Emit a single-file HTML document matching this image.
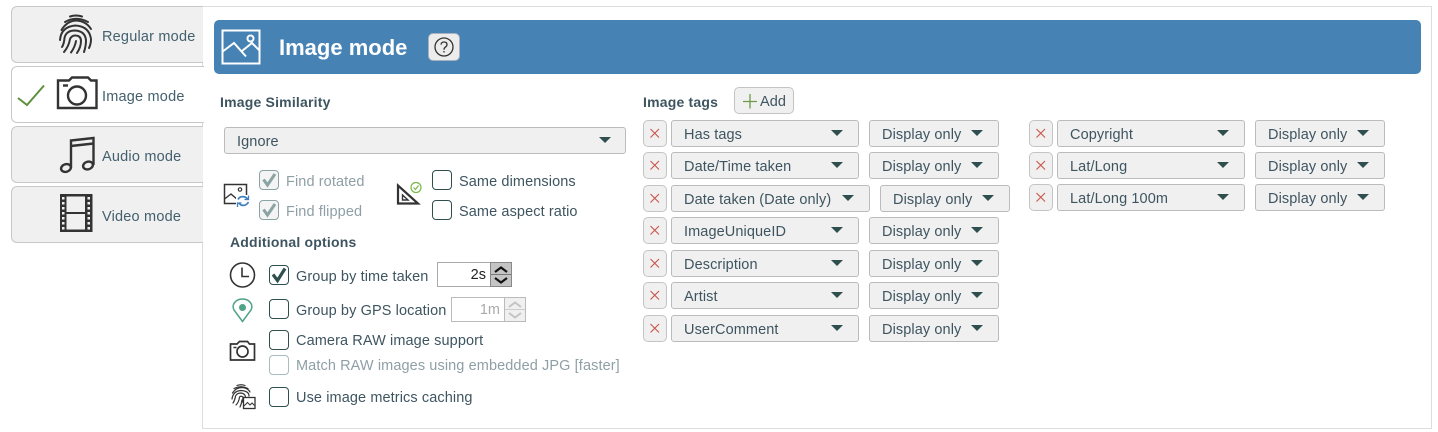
<!DOCTYPE html>
<html><head><meta charset="utf-8"><style>
html,body{margin:0;padding:0;background:#fff;width:1438px;height:432px;overflow:hidden}
body{position:relative;font-family:"Liberation Sans",sans-serif;font-size:14.5px;color:#3e5560}
.a{position:absolute;box-sizing:border-box;white-space:nowrap}
.t{position:absolute;white-space:nowrap;line-height:18px;letter-spacing:.1px;margin-top:1px}
.tab{position:absolute;left:11px;width:192px;height:57px;background:#f0f0f0;border:1px solid #c8c8c8;border-right:0;border-radius:6px 0 0 6px;box-sizing:border-box}
.tl{position:absolute;left:102px;white-space:nowrap;line-height:18px;color:#44606e;letter-spacing:.2px;margin-top:1px}
.s{position:absolute;box-sizing:border-box;height:27px;background:#f0f0f0;border:1px solid #bbb;border-radius:3px;white-space:nowrap;line-height:28px;padding-left:12px;color:#3e5560;letter-spacing:.1px}
.s i{position:absolute;top:9px;width:0;height:0;border-left:6.5px solid transparent;border-right:6.5px solid transparent;border-top:6px solid #2f4f4f}
.x{position:absolute;box-sizing:border-box;width:24px;height:27px;background:#f0f0f0;border:1px solid #c4c4c4;border-radius:5px}
.x svg{position:absolute;left:5px;top:6px}
.c{position:absolute;box-sizing:border-box;width:20px;height:20px;border:1.5px solid #2f4f4f;border-radius:4px;background:#fff}
.c.d{border-color:#8aa3a3;background:#f4f4f4}
.c.f{border-color:#a9bcbc}
.c svg{position:absolute;left:0;top:0}
.b{font-weight:bold;letter-spacing:.2px;color:#3e5560;font-size:14px;margin-top:0}
.g{color:#8f9fa6}
svg{position:absolute;overflow:visible}
</style></head><body>
<div class="a" style="left:202px;top:6px;width:1230px;height:423px;border:1px solid #ddd"></div>

<div class="tab" style="top:6px"></div>
<div class="tab" style="top:66px;background:#fff;width:193px"></div>
<div class="tab" style="top:126px"></div>
<div class="tab" style="top:186px"></div>
<div class="tl" style="top:27px">Regular mode</div>
<div class="tl" style="top:87px">Image mode</div>
<div class="tl" style="top:147px">Audio mode</div>
<div class="tl" style="top:207px">Video mode</div>

<svg style="left:0;top:0" width="210" height="250" fill="none" stroke="#333">
<g stroke-width="2" stroke-linecap="round">
<path d="M70 16.500Q76 14.500 82 16.500"/>
<path d="M65 22Q76 15.500 88 22"/>
<path d="M61.500 30Q67 21 76 20.500Q86 21 91 29"/>
<path d="M60 40Q61 27 75 25.500Q89 26 91 39Q91 44 89 48"/>
<path d="M62 47Q64 44 64.500 38Q66 30.500 75 30.500Q85 31 86 40Q86 46 84 52"/>
<path d="M64 52Q69 46 70 39Q72 35 76 35.500Q81 36 81 41Q81 47 77 53"/>
<path d="M71 52.500Q75 47 76 41"/>
</g>
<path d="M18 98L27 105L44 85.500" stroke="#5f8f3e" stroke-width="2"/>
<path d="M58 80.500H69L72 77.500H88L91 80.500H96.500V108H58Z" stroke-width="2.400"/>
<circle cx="77" cy="95.500" r="9" stroke-width="2.400"/>
<path d="M63 85.500H68" stroke-width="2.400"/>
<g stroke-width="2.400">
<ellipse cx="66" cy="168" rx="5" ry="3.800" transform="rotate(-18 66 168)"/>
<ellipse cx="88" cy="165.500" rx="5" ry="3.800" transform="rotate(-18 88 165.500)"/>
<path d="M71 168V140.500L93.500 138V165"/>
<path d="M71 146L93.500 143.500" stroke-width="2.500"/>
</g>
<rect x="60" y="194" width="32.500" height="38" fill="#333" stroke="none"/>
<rect x="66.500" y="196.500" width="18.500" height="15.500" fill="#f0f0f0" stroke="none"/>
<rect x="66.500" y="214" width="18.500" height="15.500" fill="#f0f0f0" stroke="none"/>
<g fill="#f0f0f0" stroke="none">
<rect x="62" y="197" width="2.500" height="2.500"/><rect x="62" y="202" width="2.500" height="2.500"/><rect x="62" y="207" width="2.500" height="2.500"/><rect x="62" y="212" width="2.500" height="2.500"/><rect x="62" y="217" width="2.500" height="2.500"/><rect x="62" y="222" width="2.500" height="2.500"/><rect x="62" y="227" width="2.500" height="2.500"/>
<rect x="87.500" y="197" width="2.500" height="2.500"/><rect x="87.500" y="202" width="2.500" height="2.500"/><rect x="87.500" y="207" width="2.500" height="2.500"/><rect x="87.500" y="212" width="2.500" height="2.500"/><rect x="87.500" y="217" width="2.500" height="2.500"/><rect x="87.500" y="222" width="2.500" height="2.500"/><rect x="87.500" y="227" width="2.500" height="2.500"/>
</g>
</svg>

<div class="a" style="left:214px;top:20px;width:1207px;height:54px;background:#4682b4;border-radius:5px"></div>
<svg style="left:0;top:0" width="270" height="80" fill="none" stroke="#fff" stroke-width="2">
<rect x="222.500" y="30.500" width="37" height="33"/>
<path d="M222 52L234 43L246 56.500M242 51L252 43L260 51"/>
<circle cx="250.500" cy="38.500" r="3"/>
</svg>
<div class="a" style="left:279px;top:34px;line-height:28px;font-size:22px;font-weight:bold;color:#fff">Image mode</div>
<div class="a" style="left:428px;top:33px;width:32px;height:28px;background:#ececec;border:1.500px solid #a6b2c0;border-radius:5px"></div>
<svg style="left:0;top:0" width="470" height="70" fill="none" stroke="#333" stroke-width="1.300">
<circle cx="444" cy="47" r="9"/>
<path d="M441 44.700Q441.200 42 444 42Q447 42 447 44.500Q447 46 445.300 47.200Q444 48 444 49.800"/>
<path d="M444 51V52.500"/>
</svg>

<div class="t b" style="left:220px;top:93px">Image Similarity</div>
<div class="s" style="left:224px;top:127px;width:402px;line-height:29px">Ignore<i style="left:374px"></i></div>

<svg style="left:0;top:0" width="430" height="420" fill="none" stroke="#333">
<rect x="224.500" y="184.500" width="22" height="19" stroke-width="1.500"/>
<path d="M224.500 199L231 194L238 200L242 196" stroke-width="1.400"/>
<circle cx="240" cy="189.500" r="1.700" stroke-width="1.200"/>
<rect x="236" y="195" width="14" height="13" fill="#fff" stroke="none"/>
<path d="M238 199.500Q240 195.500 245 197L248 199M248.500 202Q246 206.500 241 205L238.500 203" stroke="#3f7fc0" stroke-width="1.700"/>
<path d="M248.500 195.500V199.500H244.500M237.500 207V203H241.500" stroke="#3f7fc0" stroke-width="1.300"/>
<path d="M398 185.500V203.500H418Z" stroke-width="2.200"/>
<path d="M402.500 195V200H408Z" stroke-width="1.400"/>
<circle cx="416" cy="187.500" r="5" stroke="#7ab648" stroke-width="1.200" fill="#fff"/>
<path d="M413.500 187.500L415.500 189.500L418.500 185.500" stroke="#7ab648" stroke-width="1.200"/>
<circle cx="242.500" cy="275" r="12" stroke-width="1.600"/>
<path d="M242 267.500V276.500H249" stroke-width="1.600"/>
<path d="M242.500 321.500L234 310Q232.500 307 233.500 304.500Q236 299 242.500 299Q249 299 251.500 304.500Q252.500 307 251 310Z" stroke="#4fa387" stroke-width="1.500"/>
<circle cx="242.500" cy="307.500" r="3.500" fill="#4fa387" stroke="none"/>
<path d="M230.500 344H237L239.500 341.500H247.500L249.500 344H254.500V360H230.500Z" stroke-width="1.700"/>
<circle cx="242.500" cy="351.500" r="5.500" stroke-width="1.700"/>
<path d="M233.500 347.500H236.500" stroke-width="1.500"/>
<g stroke-width="1.200" stroke-linecap="round">
<path d="M237 385.500Q241 384 245 385.500"/>
<path d="M234 388.500Q241 385 248 388.500"/>
<path d="M232.500 393Q236 387.500 242 387.500Q248 388 250 392"/>
<path d="M232 399Q233 391 241 390.500Q249 391 249 396"/>
<path d="M233 403Q235 400 235.500 396Q237 393 241 393Q245 393.500 245.500 397"/>
<path d="M236 405Q239 402 239.500 397Q241 395.500 243 397L242.500 402"/>
<path d="M240 407Q241.500 404 242 400"/>
</g>
<rect x="243.500" y="397.500" width="11.500" height="11" fill="#fff" stroke-width="1.300"/>
<path d="M244 406L247.500 402.500L250 405L252 403L254.500 405.500" stroke-width="1"/>
</svg>

<div class="c d" style="left:259px;top:170px"><svg width="18" height="18" fill="none" stroke="#8aa3a3" stroke-width="3"><path d="M3.500 8.500L7.500 14L15 3"/></svg></div>
<div class="t g" style="left:286px;top:172px">Find rotated</div>
<div class="c d" style="left:259px;top:200px"><svg width="18" height="18" fill="none" stroke="#8aa3a3" stroke-width="3"><path d="M3.500 8.500L7.500 14L15 3"/></svg></div>
<div class="t g" style="left:286px;top:202px">Find flipped</div>
<div class="c" style="left:432px;top:170px"></div>
<div class="t" style="left:459px;top:172px">Same dimensions</div>
<div class="c" style="left:432px;top:200px"></div>
<div class="t" style="left:459px;top:202px">Same aspect ratio</div>

<div class="t b" style="left:230px;top:233px">Additional options</div>
<div class="c" style="left:269px;top:265px"><svg width="18" height="18" fill="none" stroke="#2f4f4f" stroke-width="3.200"><path d="M3 8.500L7.500 14.500L15 2.500"/></svg></div>
<div class="t" style="left:296px;top:267px">Group by time taken</div>
<div class="a" style="left:437px;top:262px;width:54px;height:25px;border:1px solid #aaa;background:#fff;text-align:right;padding-right:4px;line-height:25px;color:#222">2s</div>
<div class="a" style="left:490px;top:262px;width:22px;height:25px;background:#c4c4c4;border:1px solid #888"></div>
<svg style="left:0;top:0" width="530" height="330" fill="none">
<path d="M495 272L501 267.500L507 272M495 278L501 282.500L507 278" stroke="#111" stroke-width="2.200"/>
<path d="M491 274.500H511" stroke="#777" stroke-width="1"/>
</svg>
<div class="c" style="left:269px;top:299px"></div>
<div class="t" style="left:296px;top:301px">Group by GPS location</div>
<div class="a" style="left:451px;top:297px;width:54px;height:25px;border:1px solid #bbb;background:#fff;text-align:right;padding-right:4px;line-height:25px;color:#aaa">1m</div>
<div class="a" style="left:504px;top:297px;width:22px;height:25px;background:#f0f0f0;border:1px solid #bbb"></div>
<svg style="left:0;top:0" width="530" height="330" fill="none">
<path d="M509 307L515 302.500L521 307M509 313L515 317.500L521 313" stroke="#c4c4c4" stroke-width="2"/>
<path d="M505 309.500H525" stroke="#ccc" stroke-width="1"/>
</svg>
<div class="c" style="left:269px;top:330px"></div>
<div class="t" style="left:296px;top:331px">Camera RAW image support</div>
<div class="c f" style="left:269px;top:355px"></div>
<div class="t g" style="left:296px;top:356px">Match RAW images using embedded JPG [faster]</div>
<div class="c" style="left:269px;top:387px"></div>
<div class="t" style="left:296px;top:388px">Use image metrics caching</div>

<div class="t b" style="left:643px;top:93px">Image tags</div>
<div class="a" style="left:734px;top:87px;width:60px;height:27px;background:#f0f0f0;border:1px solid #c4c4c4;border-radius:5px"></div>
<svg style="left:0;top:0" width="800" height="120" fill="none"><path d="M743 101.500H757M750 94V108.500" stroke="#6d9a4a" stroke-width="1.300"/></svg>
<div class="t" style="left:760px;top:91.500px">Add</div>

<div class="x" style="left:643px;top:120px"><svg width="12" height="12" fill="none" stroke="#c9544c" stroke-width="1.100"><path d="M1.500 2L10 10.500M10 2L1.500 10.500"/></svg></div>
<div class="s" style="left:671px;top:120px;width:188px">Has tags<i style="left:158.500px"></i></div>
<div class="s" style="left:869px;top:120px;width:130px">Display only<i style="left:100.500px"></i></div>

<div class="x" style="left:643px;top:152px"><svg width="12" height="12" fill="none" stroke="#c9544c" stroke-width="1.100"><path d="M1.500 2L10 10.500M10 2L1.500 10.500"/></svg></div>
<div class="s" style="left:671px;top:152px;width:188px">Date/Time taken<i style="left:158.500px"></i></div>
<div class="s" style="left:869px;top:152px;width:130px">Display only<i style="left:100.500px"></i></div>

<div class="x" style="left:643px;top:185px"><svg width="12" height="12" fill="none" stroke="#c9544c" stroke-width="1.100"><path d="M1.500 2L10 10.500M10 2L1.500 10.500"/></svg></div>
<div class="s" style="left:671px;top:185px;width:199px">Date taken (Date only)<i style="left:169.500px"></i></div>
<div class="s" style="left:880px;top:185px;width:130px">Display only<i style="left:100.500px"></i></div>

<div class="x" style="left:643px;top:217px"><svg width="12" height="12" fill="none" stroke="#c9544c" stroke-width="1.100"><path d="M1.500 2L10 10.500M10 2L1.500 10.500"/></svg></div>
<div class="s" style="left:671px;top:217px;width:188px">ImageUniqueID<i style="left:158.500px"></i></div>
<div class="s" style="left:869px;top:217px;width:130px">Display only<i style="left:100.500px"></i></div>

<div class="x" style="left:643px;top:250px"><svg width="12" height="12" fill="none" stroke="#c9544c" stroke-width="1.100"><path d="M1.500 2L10 10.500M10 2L1.500 10.500"/></svg></div>
<div class="s" style="left:671px;top:250px;width:188px">Description<i style="left:158.500px"></i></div>
<div class="s" style="left:869px;top:250px;width:130px">Display only<i style="left:100.500px"></i></div>

<div class="x" style="left:643px;top:282px"><svg width="12" height="12" fill="none" stroke="#c9544c" stroke-width="1.100"><path d="M1.500 2L10 10.500M10 2L1.500 10.500"/></svg></div>
<div class="s" style="left:671px;top:282px;width:188px">Artist<i style="left:158.500px"></i></div>
<div class="s" style="left:869px;top:282px;width:130px">Display only<i style="left:100.500px"></i></div>

<div class="x" style="left:643px;top:315px"><svg width="12" height="12" fill="none" stroke="#c9544c" stroke-width="1.100"><path d="M1.500 2L10 10.500M10 2L1.500 10.500"/></svg></div>
<div class="s" style="left:671px;top:315px;width:188px">UserComment<i style="left:158.500px"></i></div>
<div class="s" style="left:869px;top:315px;width:130px">Display only<i style="left:100.500px"></i></div>

<div class="x" style="left:1029px;top:120px"><svg width="12" height="12" fill="none" stroke="#c9544c" stroke-width="1.100"><path d="M1.500 2L10 10.500M10 2L1.500 10.500"/></svg></div>
<div class="s" style="left:1057px;top:120px;width:188px">Copyright<i style="left:158.500px"></i></div>
<div class="s" style="left:1255px;top:120px;width:130px">Display only<i style="left:100.500px"></i></div>

<div class="x" style="left:1029px;top:152px"><svg width="12" height="12" fill="none" stroke="#c9544c" stroke-width="1.100"><path d="M1.500 2L10 10.500M10 2L1.500 10.500"/></svg></div>
<div class="s" style="left:1057px;top:152px;width:188px">Lat/Long<i style="left:158.500px"></i></div>
<div class="s" style="left:1255px;top:152px;width:130px">Display only<i style="left:100.500px"></i></div>

<div class="x" style="left:1029px;top:184px"><svg width="12" height="12" fill="none" stroke="#c9544c" stroke-width="1.100"><path d="M1.500 2L10 10.500M10 2L1.500 10.500"/></svg></div>
<div class="s" style="left:1057px;top:184px;width:188px">Lat/Long 100m<i style="left:158.500px"></i></div>
<div class="s" style="left:1255px;top:184px;width:130px">Display only<i style="left:100.500px"></i></div>
</body></html>
